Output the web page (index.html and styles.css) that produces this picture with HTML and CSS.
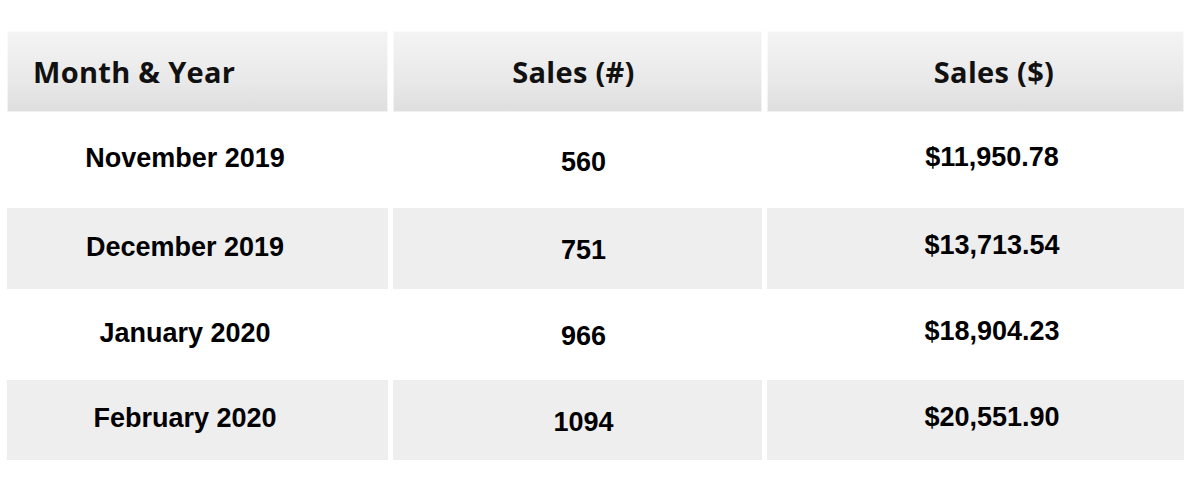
FILE: index.html
```html
<!DOCTYPE html>
<html>
<head>
<meta charset="utf-8">
<link rel="stylesheet" href="styles.css">
</head>
<body>
<div class="table">
  <div class="th c1">Month &amp; Year</div>
  <div class="th c2">Sales (#)</div>
  <div class="th c3">Sales ($)</div>

  <div class="td c1">November 2019</div>
  <div class="td c2">560</div>
  <div class="td c3">$11,950.78</div>

  <div class="td c1 shade">December 2019</div>
  <div class="td c2 shade">751</div>
  <div class="td c3 shade">$13,713.54</div>

  <div class="td c1">January 2020</div>
  <div class="td c2">966</div>
  <div class="td c3">$18,904.23</div>

  <div class="td c1 shade">February 2020</div>
  <div class="td c2 shade">1094</div>
  <div class="td c3 shade">$20,551.90</div>
</div>
</body>
</html>
```
FILE: styles.css
```css
html, body {
  margin: 0;
  padding: 0;
  background: #ffffff;
}
body {
  padding: 31px 0 0 7px;
}
.table {
  display: grid;
  grid-template-columns: 381px 369px 417px;
  grid-template-rows: 81px 86px 81px 81px 80px;
  gap: 5px;
}
.th {
  display: flex;
  align-items: center;
  font-family: "Open Sans", Lato, "Liberation Sans", sans-serif;
  font-weight: 700;
  font-size: 29px;
  letter-spacing: 0.3px;
  color: #111111;
  background: linear-gradient(to bottom, #f4f4f4 0%, #e9e9e9 60%, #dedede 100%);
  box-shadow: inset 0 0 0 1px rgba(255,255,255,0.6);
}
.th.c1 {
  padding-left: 26px;
}
.th.c2 {
  justify-content: center;
  padding-right: 8px;
}
.th.c3 {
  justify-content: center;
  padding-left: 37px;
}
.td {
  display: flex;
  align-items: center;
  justify-content: center;
  font-family: "Liberation Sans", Arial, sans-serif;
  font-weight: 700;
  font-size: 27px;
  color: #000000;
}
.td.shade {
  background: #eeeeee;
}
.td.c1 {
  padding-right: 25px;
  padding-bottom: 3px;
}
.td.c2 {
  padding-left: 12px;
  padding-top: 4px;
}
.td.c3 {
  padding-left: 33px;
  padding-bottom: 6px;
}
```
